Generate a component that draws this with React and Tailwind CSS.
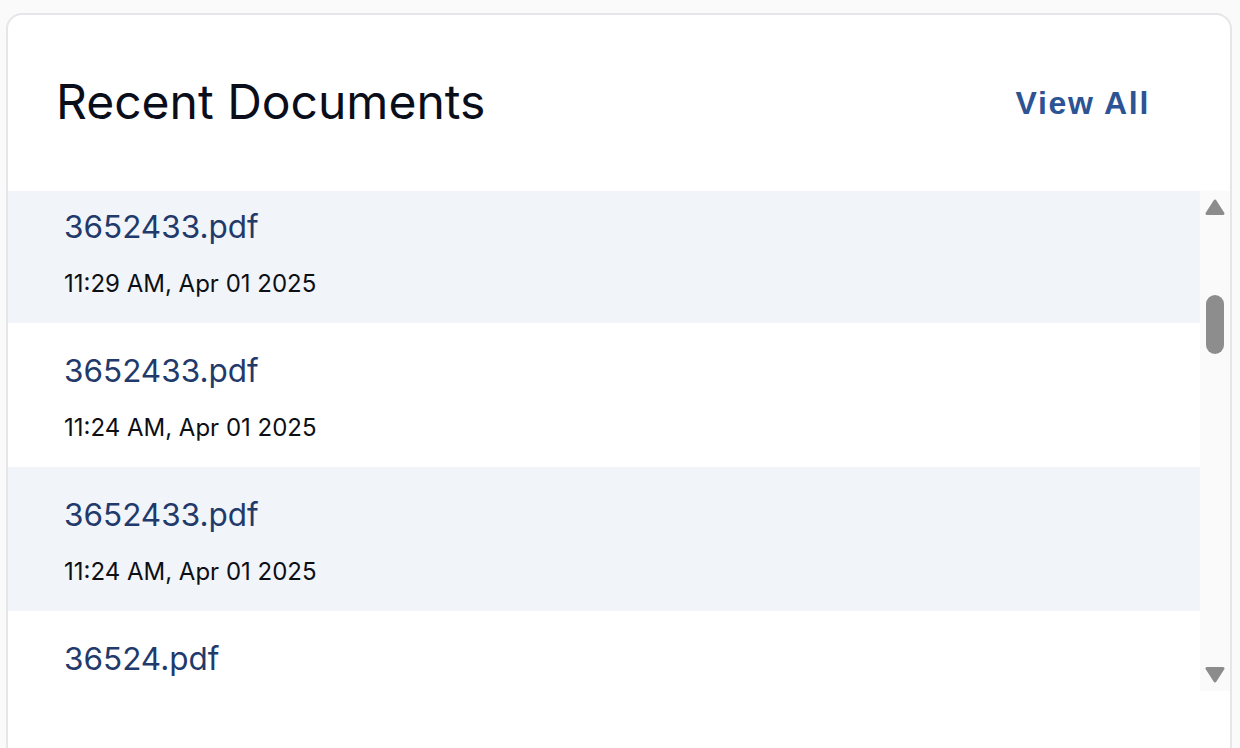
import React from 'react';

const docs = [
  { name: '3652433.pdf', date: '11:29 AM, Apr 01 2025' },
  { name: '3652433.pdf', date: '11:24 AM, Apr 01 2025' },
  { name: '3652433.pdf', date: '11:24 AM, Apr 01 2025' },
  { name: '36524.pdf', date: '11:20 AM, Apr 01 2025' },
];

const App = () => {
  return (
    <div className="h-screen overflow-hidden bg-[#fafafa] pt-[13px] pl-[6px] pr-[8px] font-['Inter',sans-serif]">
      <div className="h-[800px] bg-white border-2 border-[#e6e6ea] rounded-[16px] flex flex-col">
        {/* Header */}
        <header className="h-[176px] shrink-0 flex items-center justify-between pl-[48px] pr-[80px]">
          <h1 className="text-[48px] leading-[58px] font-normal text-[#0a0e1a] pb-[2px]">Recent Documents</h1>
          <button className="font-['Liberation_Sans',sans-serif] font-bold text-[32px] leading-[40px] tracking-[1.7px] text-[#2c5494]">
            View All
          </button>
        </header>

        {/* Lista cu scrollbar */}
        <div className="flex h-[500px] shrink-0">
          <div className="flex-1 overflow-hidden">
            <ul className="-mt-[12px]">
              {docs.map((doc, i) => (
                <li
                  key={i}
                  className={`h-[144px] pl-[56px] pt-[28px] ${i % 2 === 0 ? 'bg-[#f1f4f9]' : 'bg-white'}`}
                >
                  <p className="text-[31.5px] leading-[40px] text-[#1f3a6b]">{doc.name}</p>
                  <p className="mt-[21px] text-[24px] leading-[32px] text-[#0d0f14]">{doc.date}</p>
                </li>
              ))}
            </ul>
          </div>
          <div className="w-[30px] shrink-0 bg-[#fafafa] flex flex-col items-center pt-[8px] pb-[8px]">
            <svg width="20" height="17" viewBox="0 0 20 17">
              <path d="M10 2 L18 14.5 L2 14.5 Z" fill="#8c8c8c" stroke="#8c8c8c" strokeWidth="3" strokeLinejoin="round" />
            </svg>
            <div className="mt-[79px] w-[18px] h-[59px] rounded-full bg-[#8d8d8d]" />
            <div className="flex-1" />
            <svg width="20" height="17" viewBox="0 0 20 17">
              <path d="M2 2.5 L18 2.5 L10 15 Z" fill="#8c8c8c" stroke="#8c8c8c" strokeWidth="3" strokeLinejoin="round" />
            </svg>
          </div>
        </div>
      </div>
    </div>
  );
};

export default App;
